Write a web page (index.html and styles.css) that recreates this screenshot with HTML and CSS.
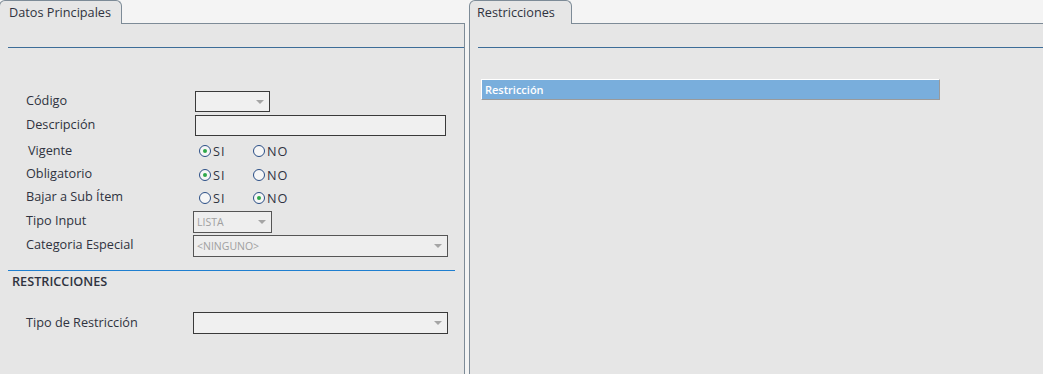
FILE: index.html
```html
<!DOCTYPE html>
<html lang="es">
<head>
<meta charset="utf-8">
<title>Datos Principales</title>
<link rel="stylesheet" href="styles.css">
</head>
<body>
<div class="page">
  <section class="panel panel-left">
    <div class="tabs">
      <div class="tab">Datos Principales</div>
      <div class="tabs-rest"></div>
    </div>
    <div class="body body-left">
      <div class="rule"></div>
      <div class="form">
        <div class="row r1"><span class="label">Código</span><div class="select sel-code"><span class="arrow"></span></div></div>
        <div class="row r2"><span class="label">Descripción</span><div class="input inp-desc"></div></div>
        <div class="row r3"><span class="label lbl-shift">Vigente</span>
          <div class="radios"><span class="radio checked"></span><span class="rtxt">SI</span><span class="radio"></span><span class="rtxt">NO</span></div></div>
        <div class="row r4"><span class="label">Obligatorio</span>
          <div class="radios"><span class="radio checked"></span><span class="rtxt">SI</span><span class="radio"></span><span class="rtxt">NO</span></div></div>
        <div class="row r5"><span class="label">Bajar a Sub Ítem</span>
          <div class="radios"><span class="radio"></span><span class="rtxt">SI</span><span class="radio checked"></span><span class="rtxt">NO</span></div></div>
        <div class="row r6"><span class="label">Tipo Input</span><div class="select sel-tipo disabled"><span class="val">LISTA</span><span class="arrow"></span></div></div>
        <div class="row r7"><span class="label">Categoria Especial</span><div class="select sel-wide disabled"><span class="val">&lt;NINGUNO&gt;</span><span class="arrow"></span></div></div>
      </div>
      <div class="rule2"></div>
      <div class="section-title">RESTRICCIONES</div>
      <div class="row r8"><span class="label">Tipo de Restricción</span><div class="select sel-wide"><span class="arrow"></span></div></div>
    </div>
  </section>
  <section class="panel panel-right">
    <div class="tabs">
      <div class="tab tab-right">Restricciones</div>
      <div class="tabs-rest"></div>
    </div>
    <div class="body body-right">
      <div class="rule"></div>
      <div class="grid-head">Restricción</div>
    </div>
  </section>
</div>
</body>
</html>
```
FILE: styles.css
```css
html, body {
  margin: 0;
  padding: 0;
  background: #f4f4f4;
}
body {
  font-family: "Open Sans", "Noto Sans", "Liberation Sans", sans-serif;
  font-size: 12.7px;
  color: #2f3340;
  width: 1043px;
  height: 374px;
  overflow: hidden;
}
.page {
  display: flex;
  height: 374px;
  gap: 4px;
}
.panel {
  display: flex;
  flex-direction: column;
}
.panel-left { width: 465px; }
.panel-right { flex: 1; }
.tabs {
  display: flex;
  height: 24px;
}
.tab {
  height: 23px;
  border: 1px solid #7d8b97;
  border-bottom: none;
  border-radius: 6px 6px 0 0;
  background: #e6e6e6;
  padding: 0 8px 0 9px;
  line-height: 22px;
  box-sizing: content-box;
  width: 104px;
  white-space: nowrap;
}
.panel-left .tab {
  margin-left: -1px;
}
.tab-right {
  width: 88px;
  padding-left: 7px;
  padding-right: 6px;
}
.tabs-rest {
  flex: 1;
  border-bottom: 1px solid #7d8b97;
}
.body {
  flex: 1;
  background: #e6e6e6;
  display: flex;
  flex-direction: column;
}
.body-left {
  border-right: 1px solid #7d8b97;
}
.body-right {
  border-left: 1px solid #7d8b97;
}
.rule {
  margin: 23px 0 0 8px;
  height: 1px;
  background: #3d6d98;
}
.form {
  margin-top: 43px;
  display: flex;
  flex-direction: column;
}
.row {
  display: flex;
  align-items: center;
}
.label {
  width: 167px;
  padding-left: 26px;
  margin-top: -3px;
  white-space: nowrap;
}
.lbl-shift { padding-left: 28px; width: 165px; }
.r1 { height: 21px; }
.r2 { height: 21px; margin-top: 3px; }
.r3 { height: 24px; margin-top: 3px; }
.r4 { height: 23px; }
.r5 { height: 23px; }
.r6 { height: 23px; margin-top: 1px; }
.r7 { height: 23px; margin-top: 1px; }
.r8 { height: 22px; margin-top: 22px; }
.r1 .select, .r2 .input { margin-left: 2px; }
.select, .input {
  box-sizing: border-box;
  height: 21px;
  border: 1px solid #3a3a3a;
  background: #f0f0f0;
  position: relative;
  display: flex;
  align-items: center;
}
.sel-code { width: 75px; }
.inp-desc { width: 251px; }
.sel-tipo { width: 79px; height: 22px; }
.sel-wide { width: 255px; height: 22px; }
.select.disabled {
  border-color: #555;
  background: #eeeeee;
}
.val {
  color: #a0a0a0;
  font-size: 10.5px;
  padding-left: 3px;
}
.arrow {
  position: absolute;
  right: 5px;
  top: 8px;
  width: 0;
  height: 0;
  border-left: 4px solid transparent;
  border-right: 4px solid transparent;
  border-top: 4px solid #a5a5a5;
}
.radios {
  display: flex;
  align-items: center;
  padding-left: 6px;
}
.radio {
  box-sizing: border-box;
  width: 12px;
  height: 12px;
  border: 1px solid #2a4e86;
  border-radius: 50%;
  background: #f6f6f6;
  position: relative;
}
.radio.checked::after {
  content: "";
  position: absolute;
  left: 3px;
  top: 3px;
  width: 4px;
  height: 4px;
  border-radius: 50%;
  background: #2fa84a;
}
.rtxt {
  margin-left: 2px;
  letter-spacing: 1px;
  width: 40px;
}
.rule2 {
  margin: 13px 0 0 8px;
  width: 447px;
  height: 1px;
  background: #1f7fd0;
}
.section-title {
  padding-left: 12px;
  margin-top: 1px;
  font-weight: 600;
  line-height: 18px;
  color: #2f3340;
}
.grid-head {
  margin: 31px 0 0 11px;
  width: 459px;
  height: 21px;
  box-sizing: border-box;
  background: #79aedc;
  border-top: 1px solid #ffffff;
  border-left: 1px solid #ffffff;
  border-bottom: 1px solid #9a9a9a;
  border-right: 1px solid #9a9a9a;
  color: #ffffff;
  font-size: 11px;
  font-weight: 600;
  line-height: 19px;
  padding-left: 3px;
}
```
